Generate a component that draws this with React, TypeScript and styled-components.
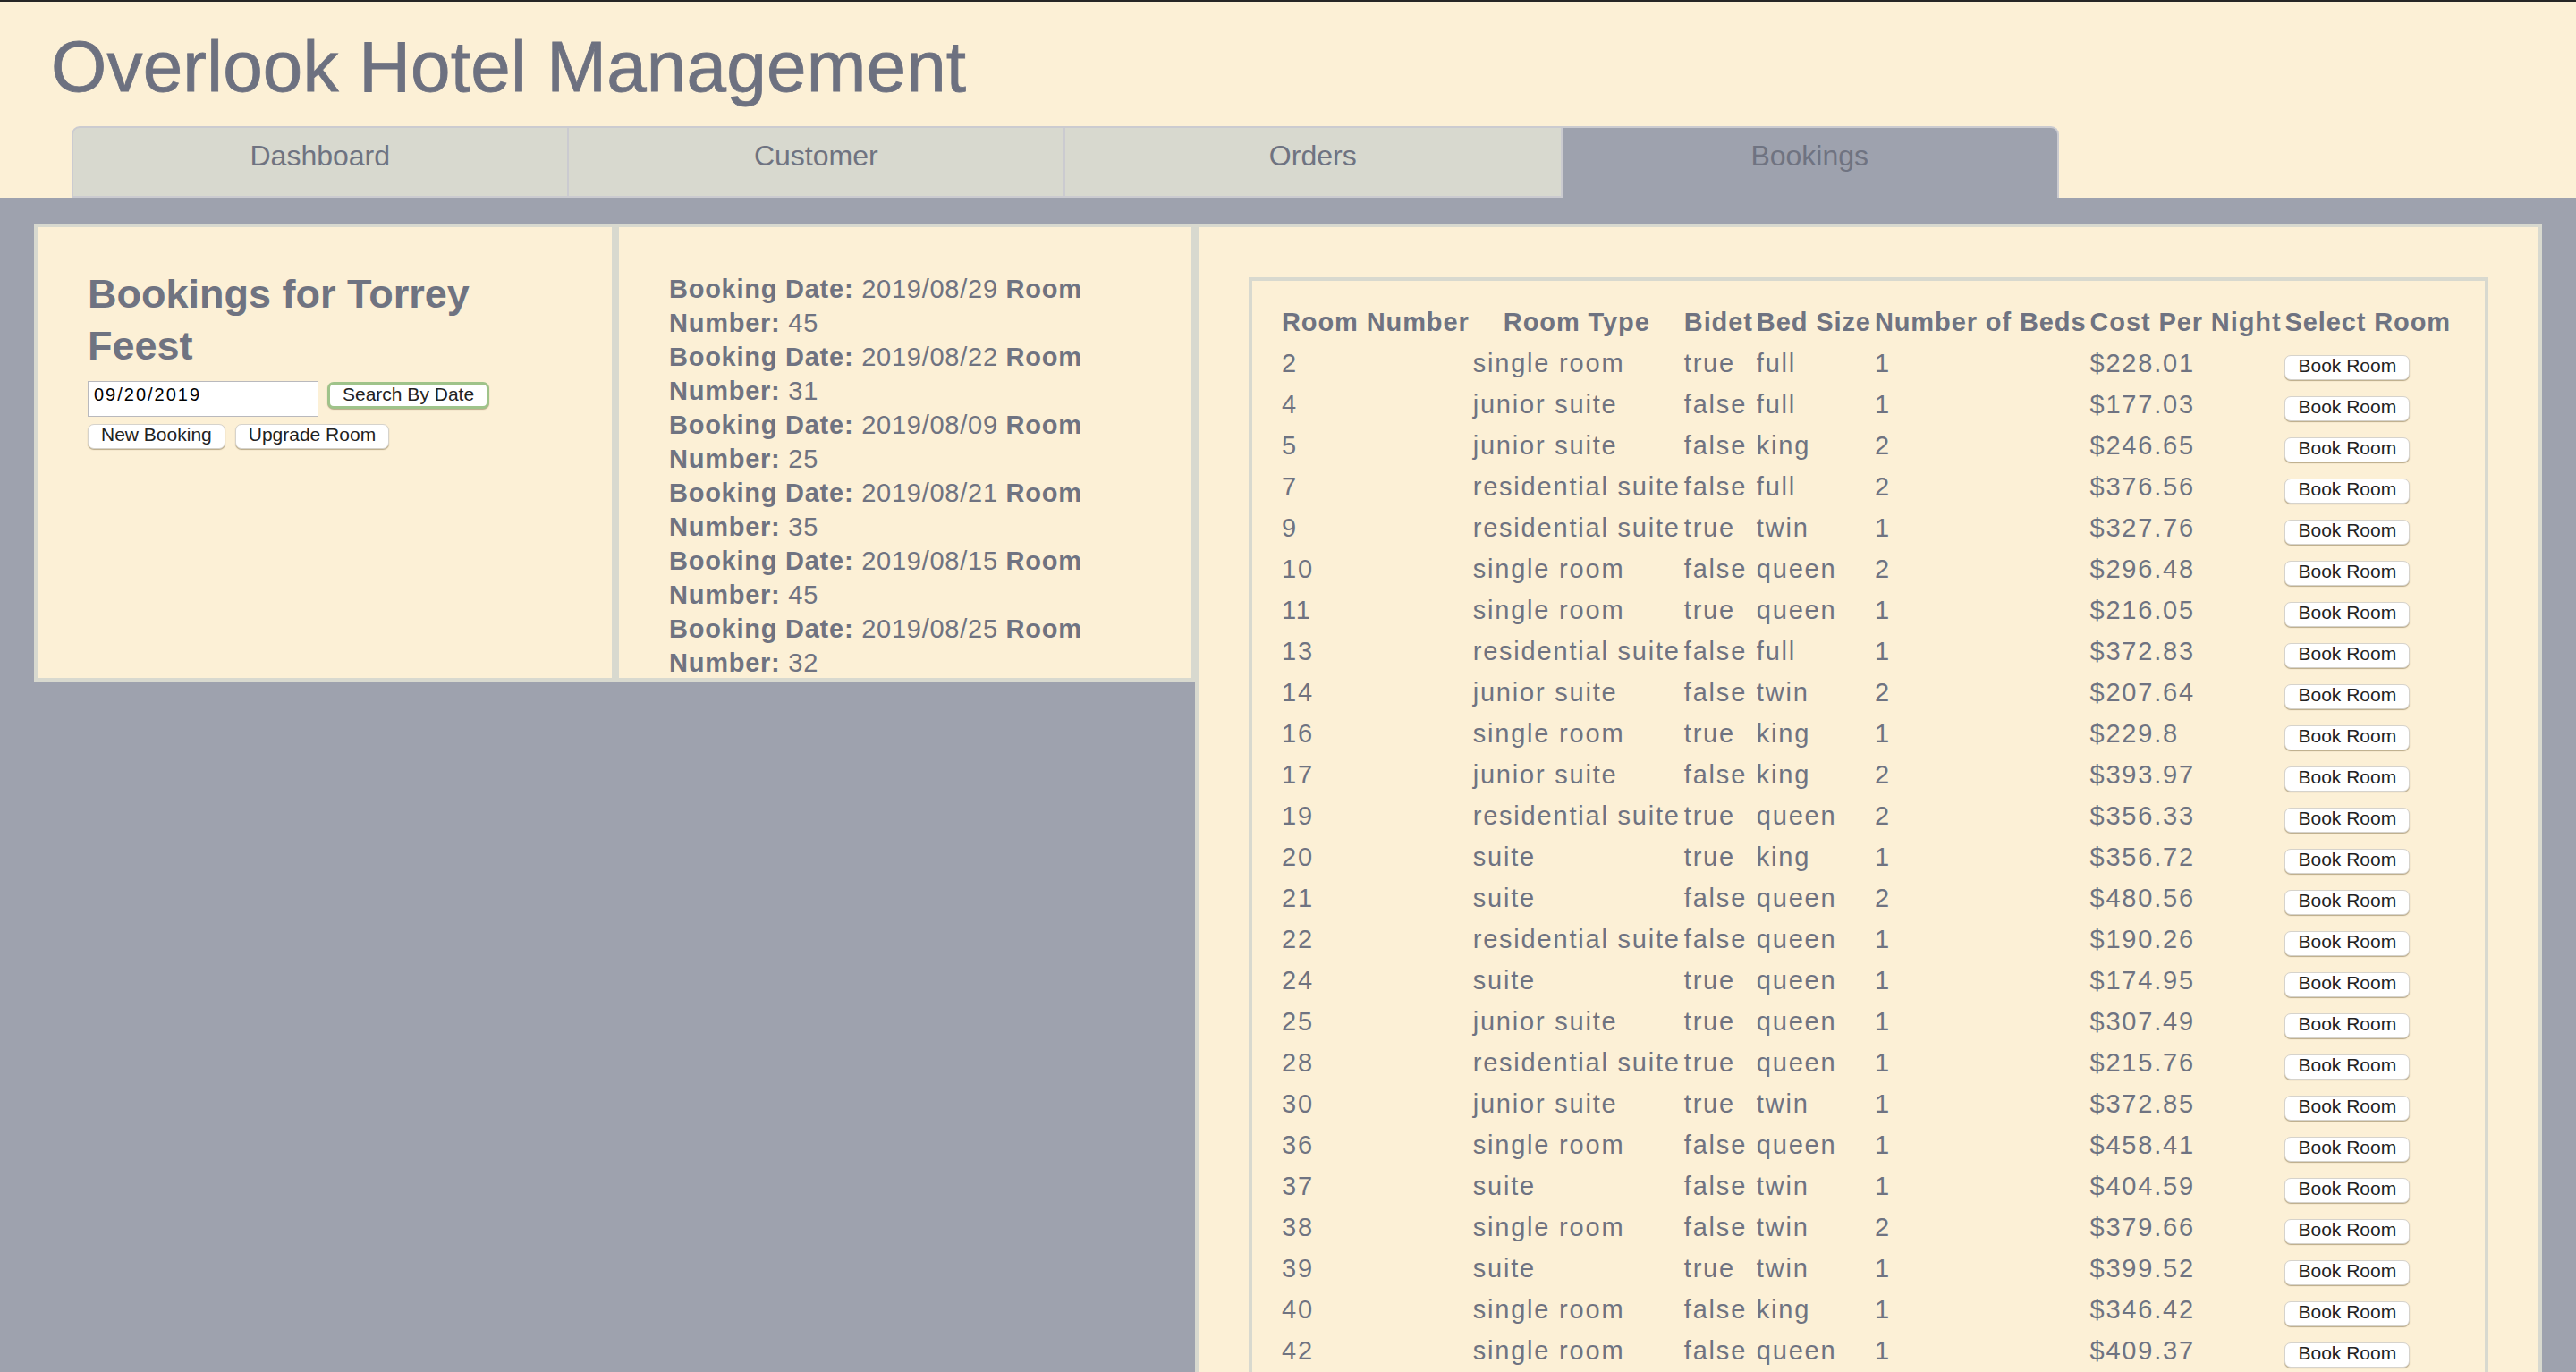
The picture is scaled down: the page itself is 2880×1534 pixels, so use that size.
import React from "react";
import styled, { createGlobalStyle } from "styled-components";

const GlobalStyle = createGlobalStyle`
  html, body {
    margin: 0;
    padding: 0;
    overflow: hidden;
  }
  body {
    background: #fcf0d6;
    font-family: "Liberation Sans", Arial, sans-serif;
    color: #6f7381;
  }
  * {
    box-sizing: border-box;
  }
`;

const Page = styled.div`
  border-top: 2px solid #262626;
  min-height: 100vh;
  display: flex;
  flex-direction: column;
`;

const Header = styled.header`
  background: #fcf0d6;
  padding-top: 27px;
`;

const Title = styled.h1`
  margin: 0 0 0 57px;
  font-size: 80px;
  font-weight: 400;
  line-height: 92px;
  letter-spacing: 0.2px;
  color: #6d7180;
  -webkit-text-stroke: 0.8px #6d7180;
`;

const TabBar = styled.nav`
  display: grid;
  grid-template-columns: repeat(4, 555.5px);
  margin: 20px 0 0 80px;
`;

const Tab = styled.div<{ $active?: boolean; $first?: boolean; $last?: boolean }>`
  height: 80px;
  padding-top: 13px;
  text-align: center;
  font-size: 32px;
  line-height: 37px;
  color: #6f7381;
  background: ${(p) => (p.$active ? "#9ea2ae" : "#d8d9cf")};
  border-top: 2px solid #cbcbd0;
  border-right: 2px solid #cbcbd0;
  border-left: ${(p) => (p.$first ? "2px solid #cbcbd0" : "none")};
  border-bottom: ${(p) => (p.$active ? "none" : "2px solid #cbcbd0")};
  border-top-left-radius: ${(p) => (p.$first ? "9px" : "0")};
  border-top-right-radius: ${(p) => (p.$last ? "9px" : "0")};
`;

const Main = styled.main`
  flex: 1;
  background: #9ea2ae;
  padding: 29px 38px 0;
  display: grid;
  grid-template-columns: 650px 648px 1fr;
  align-items: start;
`;

const Panel = styled.section`
  background: #fcf0d6;
  border: 4px solid #d8d9cf;
`;

const SidePanel = styled(Panel)<{ $top: number }>`
  height: 512px;
  overflow: hidden;
  padding: ${(p) => p.$top}px 56px 0;
`;

const RoomsPanel = styled(Panel)`
  padding: 56px 56px 0;
`;

const Heading = styled.h2`
  margin: 0;
  font-size: 45px;
  font-weight: 700;
  line-height: 58px;
  color: #6f7381;
`;

const SearchRow = styled.div`
  display: flex;
  align-items: baseline;
  gap: 10px;
  margin-top: 10px;
`;

const ActionRow = styled.div`
  display: flex;
  align-items: baseline;
  gap: 11px;
  margin-top: 8px;
`;

const DateInput = styled.input`
  width: 258px;
  height: 40px;
  padding: 3px 6px 13px;
  font-family: inherit;
  font-size: 20px;
  line-height: 22px;
  letter-spacing: 2px;
  color: #000;
  background: #fff;
  border: 1px solid #b9b9bd;
  outline: none;
`;

const Button = styled.button<{ $focused?: boolean }>`
  font-family: inherit;
  font-size: 21px;
  line-height: 21px;
  color: #222;
  background: #fff;
  border: ${(p) => (p.$focused ? "3px solid #9fc38a" : "1px solid #d6d3cc")};
  border-radius: 7px;
  padding: ${(p) => (p.$focused ? "0 14px 3px" : "0 14px 5px")};
  box-shadow: 0 1px 1px rgba(120, 100, 60, 0.5);
  cursor: pointer;
`;

const Booking = styled.p`
  margin: 0;
  font-size: 29px;
  line-height: 38px;
  letter-spacing: 0.75px;
  color: #6f7381;

  strong {
    font-weight: 700;
  }
`;

const TableBox = styled.div`
  border: 4px solid #d8d9cf;
  padding: 22px 30px 40px;
`;

const RoomTable = styled.table`
  border-spacing: 2px;
  color: #6f7381;
`;

const HeadCell = styled.th`
  padding: 1px;
  font-size: 29px;
  font-weight: 700;
  letter-spacing: 0.9px;
  line-height: 42px;
  text-align: center;
  white-space: nowrap;
`;

const Cell = styled.td`
  padding: 1px;
  font-size: 29px;
  letter-spacing: 1.8px;
  line-height: 42px;
  text-align: left;
  white-space: nowrap;
`;

type Room = [number, string, boolean, string, number, string];

const rooms: Room[] = [
  [2, "single room", true, "full", 1, "$228.01"],
  [4, "junior suite", false, "full", 1, "$177.03"],
  [5, "junior suite", false, "king", 2, "$246.65"],
  [7, "residential suite", false, "full", 2, "$376.56"],
  [9, "residential suite", true, "twin", 1, "$327.76"],
  [10, "single room", false, "queen", 2, "$296.48"],
  [11, "single room", true, "queen", 1, "$216.05"],
  [13, "residential suite", false, "full", 1, "$372.83"],
  [14, "junior suite", false, "twin", 2, "$207.64"],
  [16, "single room", true, "king", 1, "$229.8"],
  [17, "junior suite", false, "king", 2, "$393.97"],
  [19, "residential suite", true, "queen", 2, "$356.33"],
  [20, "suite", true, "king", 1, "$356.72"],
  [21, "suite", false, "queen", 2, "$480.56"],
  [22, "residential suite", false, "queen", 1, "$190.26"],
  [24, "suite", true, "queen", 1, "$174.95"],
  [25, "junior suite", true, "queen", 1, "$307.49"],
  [28, "residential suite", true, "queen", 1, "$215.76"],
  [30, "junior suite", true, "twin", 1, "$372.85"],
  [36, "single room", false, "queen", 1, "$458.41"],
  [37, "suite", false, "twin", 1, "$404.59"],
  [38, "single room", false, "twin", 2, "$379.66"],
  [39, "suite", true, "twin", 1, "$399.52"],
  [40, "single room", false, "king", 1, "$346.42"],
  [42, "single room", false, "queen", 1, "$409.37"],
];

const bookings: [string, number][] = [
  ["2019/08/29", 45],
  ["2019/08/22", 31],
  ["2019/08/09", 25],
  ["2019/08/21", 35],
  ["2019/08/15", 45],
  ["2019/08/25", 32],
];

const tabs = ["Dashboard", "Customer", "Orders", "Bookings"];

export default function App() {
  return (
    <Page>
      <GlobalStyle />
      <Header>
        <Title>Overlook Hotel Management</Title>
        <TabBar>
          {tabs.map((t, i) => (
            <Tab
              key={t}
              $active={t === "Bookings"}
              $first={i === 0}
              $last={i === tabs.length - 1}
            >
              {t}
            </Tab>
          ))}
        </TabBar>
      </Header>
      <Main>
        <SidePanel $top={46}>
          <Heading>Bookings for Torrey Feest</Heading>
          <SearchRow>
            <DateInput type="text" defaultValue="09/20/2019" />
            <Button $focused>Search By Date</Button>
          </SearchRow>
          <ActionRow>
            <Button>New Booking</Button>
            <Button>Upgrade Room</Button>
          </ActionRow>
        </SidePanel>
        <SidePanel $top={50}>
          {bookings.map(([date, num], i) => (
            <Booking key={i}>
              <strong>Booking Date:</strong> {date} <strong>Room Number:</strong> {num}
            </Booking>
          ))}
        </SidePanel>
        <RoomsPanel>
          <TableBox>
            <RoomTable>
              <thead>
                <tr>
                  <HeadCell>Room Number</HeadCell>
                  <HeadCell>Room Type</HeadCell>
                  <HeadCell>Bidet</HeadCell>
                  <HeadCell>Bed Size</HeadCell>
                  <HeadCell>Number of Beds</HeadCell>
                  <HeadCell>Cost Per Night</HeadCell>
                  <HeadCell>Select Room</HeadCell>
                </tr>
              </thead>
              <tbody>
                {rooms.map(([num, type, bidet, size, beds, cost]) => (
                  <tr key={num}>
                    <Cell>{num}</Cell>
                    <Cell>{type}</Cell>
                    <Cell>{String(bidet)}</Cell>
                    <Cell>{size}</Cell>
                    <Cell>{beds}</Cell>
                    <Cell>{cost}</Cell>
                    <Cell>
                      <Button>Book Room</Button>
                    </Cell>
                  </tr>
                ))}
              </tbody>
            </RoomTable>
          </TableBox>
        </RoomsPanel>
      </Main>
    </Page>
  );
}
